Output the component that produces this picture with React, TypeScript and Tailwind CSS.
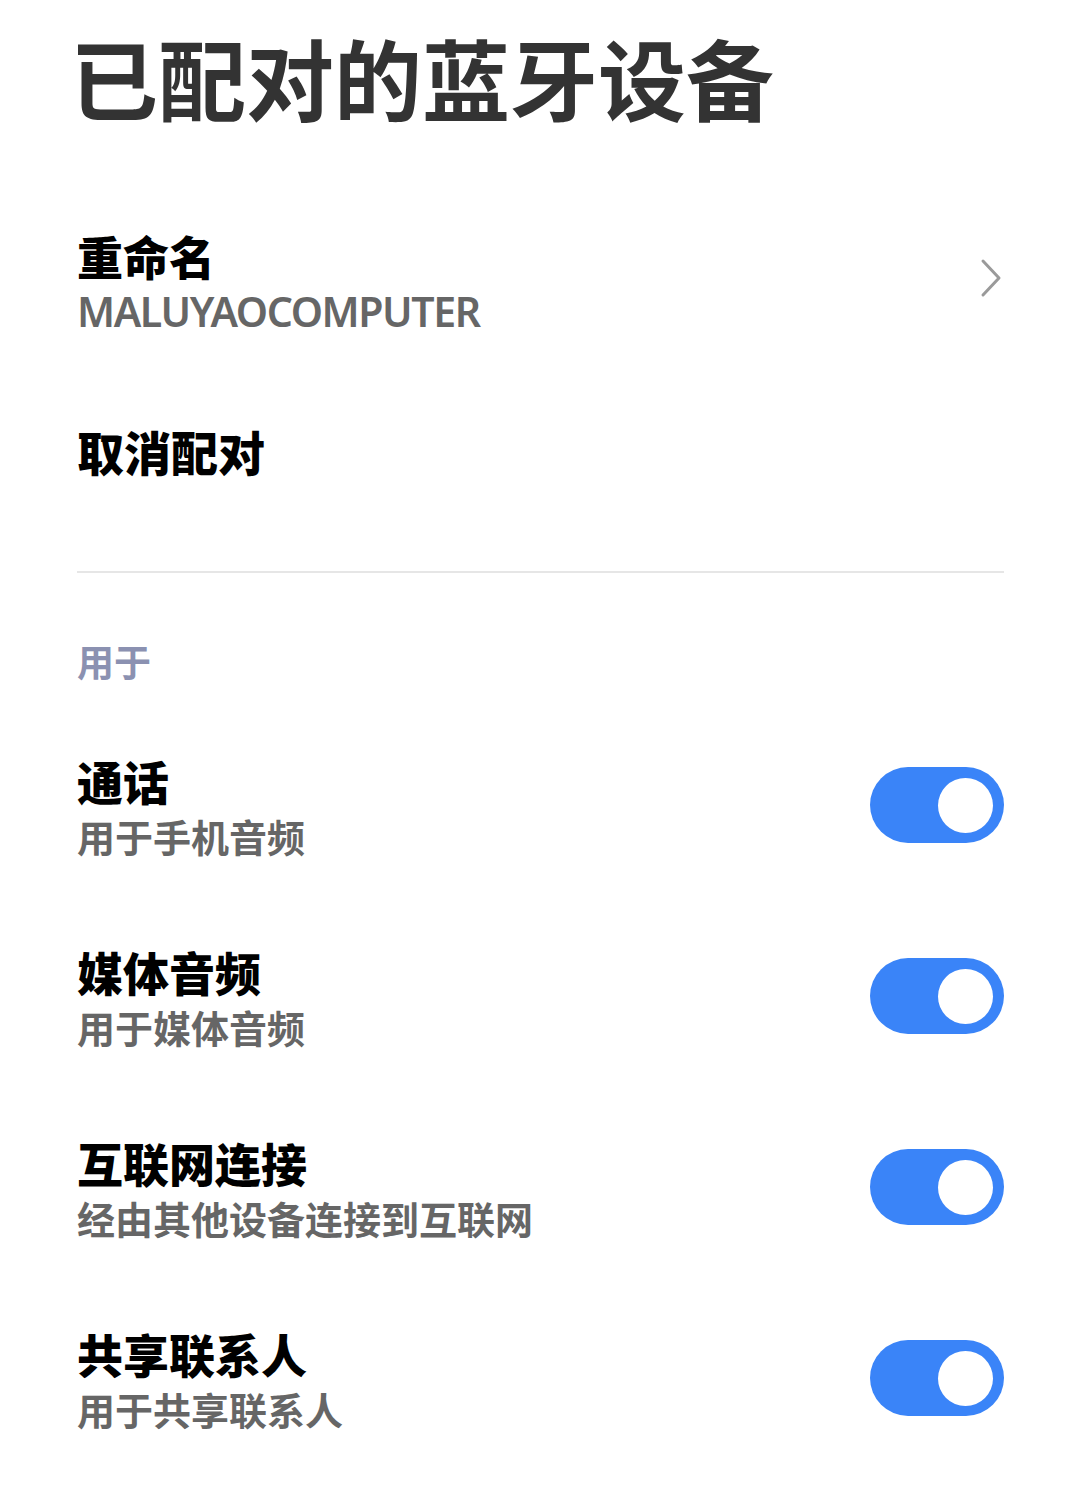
const font = { fontFamily: '"Noto Sans CJK SC", "Noto Sans", sans-serif' };

interface Toggle {
  title: string;
  desc: string;
}

const toggles: Toggle[] = [
  { title: '通话', desc: '用于手机音频' },
  { title: '媒体音频', desc: '用于媒体音频' },
  { title: '互联网连接', desc: '经由其他设备连接到互联网' },
  { title: '共享联系人', desc: '用于共享联系人' },
];

function Switch() {
  return (
    <div className="flex h-[76px] w-[134px] shrink-0 items-center justify-end rounded-full bg-[#3a84f8] pr-[11px]">
      <span className="h-[55px] w-[55px] rounded-full bg-white" />
    </div>
  );
}

export default function App() {
  return (
    <div className="min-h-[1508px] bg-white pl-[77px] pr-[76px] pt-[32px]" style={font}>
      <h1 className="-ml-[7px] text-[88px] font-bold leading-[88px] text-[#333]">
        已配对的蓝牙设备
      </h1>

      {/* 重命名 */}
      <div className="mt-[107px] flex items-center justify-between">
        <div>
          <p className="text-[46px] font-black leading-[56px] text-black">重命名</p>
          <p
            className="text-[41px] font-semibold leading-[56px] tracking-[-1.4px] text-[#666]"
            style={{ fontFamily: '"Noto Sans", sans-serif' }}
          >
            MALUYAOCOMPUTER
          </p>
        </div>
        <svg width="24" height="40" viewBox="0 0 24 40" className="mr-[1px] -mt-[10px]">
          <path d="M4 3 L20 20 L4 37" fill="none" stroke="#9a9a9a" strokeWidth="3" strokeLinecap="round" strokeLinejoin="round" />
        </svg>
      </div>

      <p className="mt-[84px] text-[47px] font-black leading-[56px] text-black">取消配对</p>

      <div className="mt-[92px] h-[2px] bg-[#e6e6e6]" />

      <p className="mt-[64px] text-[37px] font-bold leading-[48px] text-[#8b91b1]">用于</p>

      <div className="mt-[67px] flex flex-col gap-[79px]">
        {toggles.map((t) => (
          <div key={t.title} className="flex items-center justify-between">
            <div>
              <p className="text-[46px] font-black leading-[56px] text-black">{t.title}</p>
              <p className="text-[38px] font-bold leading-[56px] text-[#666]">{t.desc}</p>
            </div>
            <div className="-mt-[6px]">
              <Switch />
            </div>
          </div>
        ))}
      </div>
    </div>
  );
}
